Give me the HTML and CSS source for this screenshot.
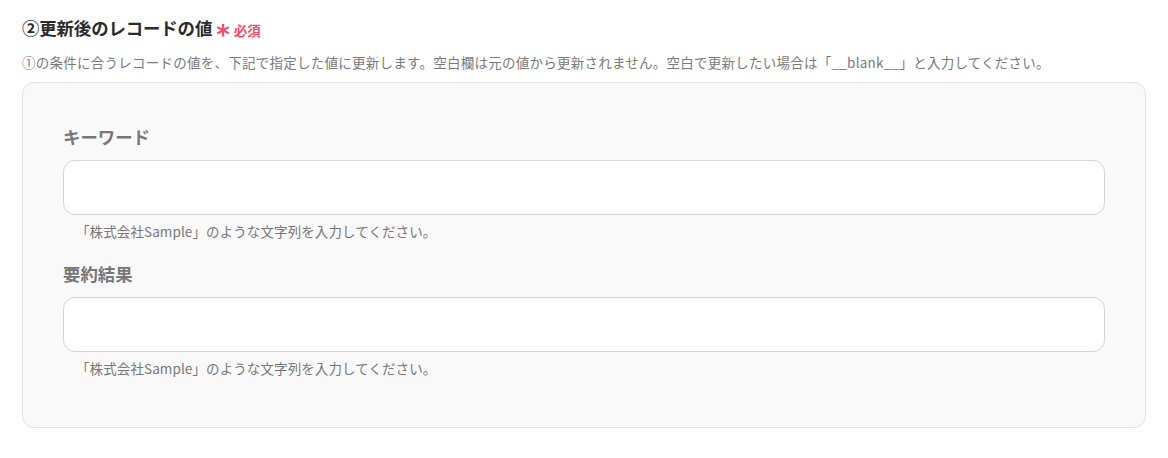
FILE: index.html
```html
<!DOCTYPE html>
<html lang="ja">
<head>
<meta charset="utf-8">
<link rel="stylesheet" href="styles.css">
</head>
<body>
<div class="page">
  <div class="heading">
    <span class="title">②更新後のレコードの値</span>
    <span class="req"><span class="star">*</span>必須</span>
  </div>
  <p class="desc">①の条件に合うレコードの値を、下記で指定した値に更新します。空白欄は元の値から更新されません。空白で更新したい場合は「__blank__」と入力してください。</p>
  <div class="panel">
    <div class="field">
      <div class="label">キーワード</div>
      <input class="input" type="text">
      <div class="hint">「株式会社Sample」のような文字列を入力してください。</div>
    </div>
    <div class="field">
      <div class="label">要約結果</div>
      <input class="input" type="text">
      <div class="hint">「株式会社Sample」のような文字列を入力してください。</div>
    </div>
  </div>
</div>
</body>
</html>
```

FILE: styles.css
```css
* { box-sizing: border-box; }
html, body { margin: 0; padding: 0; background: #fff; }
body {
  font-family: "Noto Sans CJK JP", "Open Sans", sans-serif;
  color: #333;
}
.page {
  padding: 16px 22px 0 22px;
  width: 1168px;
}
.heading {
  display: flex;
  align-items: center;
  height: 24px;
}
.title {
  font-size: 17.4px;
  font-weight: 700;
  color: #2b2b2b;
  line-height: 24px;
  letter-spacing: -0.1px;
}
.req {
  display: flex;
  align-items: center;
  color: #ef4f68;
  font-size: 13.5px;
  font-weight: 700;
  margin-left: 4px;
  margin-top: 3px;
}
.star {
  font-family: "DejaVu Sans", sans-serif;
  font-size: 26px;
  line-height: 1;
  margin-right: 4px;
  margin-top: 11px;
}
.desc {
  margin: 12px 0 0 0;
  font-size: 13.5px;
  line-height: 20px;
  color: #7a7a7a;
  white-space: nowrap;
  letter-spacing: 0.25px;
}
.panel {
  margin-top: 10px;
  width: 1124px;
  background: #f9f9fa;
  border: 1px solid #e2e2e6;
  border-radius: 12px;
  padding: 42px 40px 49px 40px;
  display: flex;
  flex-direction: column;
  gap: 21px;
}
.field {
  display: flex;
  flex-direction: column;
}
.label {
  font-size: 17.4px;
  font-weight: 700;
  line-height: 24px;
  color: #777;
}
.input {
  margin-top: 11px;
  height: 55px;
  width: 100%;
  background: #fff;
  border: 1px solid #d3d4dc;
  border-radius: 12px;
  outline: none;
  font: inherit;
}
.hint {
  margin-top: 6px;
  padding-left: 13px;
  font-size: 13.5px;
  line-height: 20px;
  color: #777;
  letter-spacing: 0.1px;
}
```
